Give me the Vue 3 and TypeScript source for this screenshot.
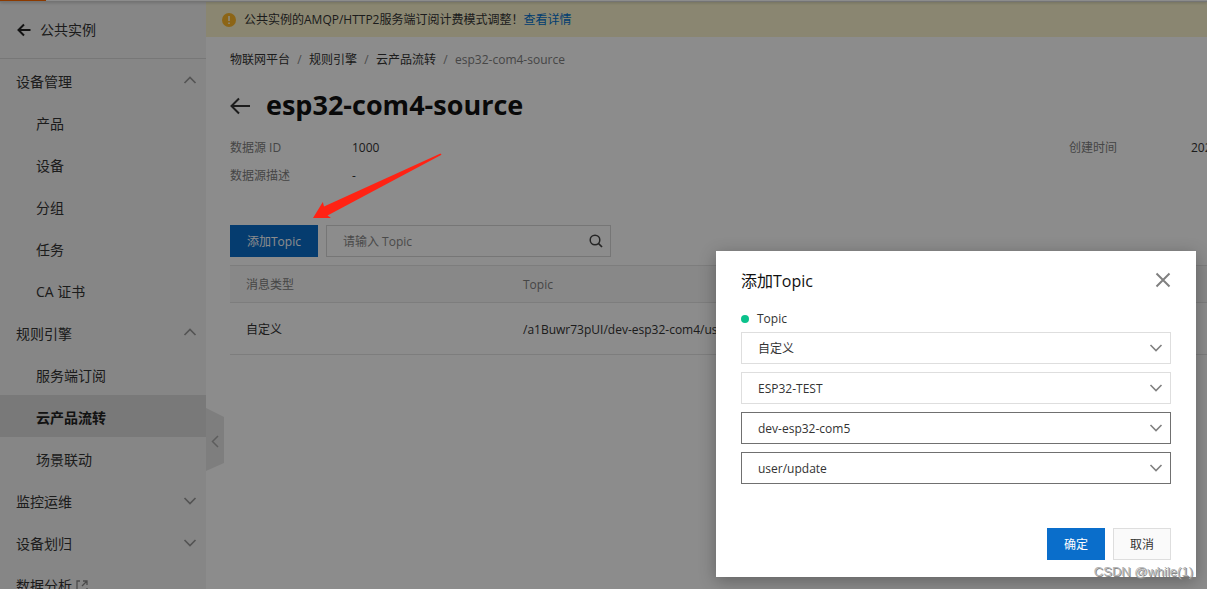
<script setup lang="ts">
import { reactive, ref } from 'vue'

interface NavItem {
  label: string
  active?: boolean
}

interface NavGroup {
  label: string
  open: boolean
  external?: boolean
  items: NavItem[]
}

interface TopicField {
  id: string
  label: string
  value: string
  strong: boolean
}

const groups = reactive<NavGroup[]>([
  {
    label: '设备管理',
    open: true,
    items: [{ label: '产品' }, { label: '设备' }, { label: '分组' }, { label: '任务' }, { label: 'CA 证书' }],
  },
  {
    label: '规则引擎',
    open: true,
    items: [{ label: '服务端订阅' }, { label: '云产品流转', active: true }, { label: '场景联动' }],
  },
  { label: '监控运维', open: false, items: [] },
  { label: '设备划归', open: false, items: [] },
  { label: '数据分析', open: false, external: true, items: [] },
])

const crumbs = ['物联网平台', '规则引擎', '云产品流转']

const fields = reactive<TopicField[]>([
  { id: 'topic-type', label: '消息类型', value: '自定义', strong: false },
  { id: 'topic-product', label: '产品', value: 'ESP32-TEST', strong: false },
  { id: 'topic-device', label: '设备', value: 'dev-esp32-com5', strong: true },
  { id: 'topic-path', label: 'Topic', value: 'user/update', strong: true },
])

const rows = [{ type: '自定义', topic: '/a1Buwr73pUI/dev-esp32-com4/user' }]

const keyword = ref('')
</script>

<template>
  <div class="page">
    <div class="topbar"><span class="topbar-mark"></span></div>
    <div class="shell">
      <aside class="sidebar">
        <a class="side-head" href="#">
          <svg width="14" height="14" viewBox="0 0 14 14" aria-hidden="true">
            <path d="M7 1.5 1.5 7 7 12.500M1.800 7H13.500" fill="none" stroke="#222" stroke-width="2" />
          </svg>
          <span>公共实例</span>
        </a>
        <nav>
          <template v-for="group in groups" :key="group.label">
            <button class="nav-group" type="button" @click="group.open = !group.open">
              <span>{{ group.label }}</span>
              <svg v-if="group.external" class="external" width="12" height="12" viewBox="0 0 12 12" aria-hidden="true">
                <path d="M4 1H1v10h10V8M7 1h4v4M11 1 6 6" fill="none" stroke="#888" stroke-width="1.300" />
              </svg>
              <svg v-else class="chevron" :class="{ up: group.open }" width="14" height="8" viewBox="0 0 14 8" aria-hidden="true">
                <path d="M1.500 1 7 6.500 12.500 1" fill="none" stroke="#999" stroke-width="1.700" />
              </svg>
            </button>
            <template v-if="group.open">
              <a v-for="item in group.items" :key="item.label" class="nav-item" :class="{ active: item.active }" href="#">
                {{ item.label }}
              </a>
            </template>
          </template>
        </nav>
      </aside>

      <main class="main">
        <button class="collapse" type="button" aria-label="收起">
          <svg width="18" height="64" viewBox="0 0 18 64" aria-hidden="true">
            <path d="M0 0 18 9V55L0 63Z" fill="#e6e6e6" />
            <path d="M12 28 6.500 33.500 12 39" fill="none" stroke="#aaa" stroke-width="1.500" />
          </svg>
        </button>

        <div class="banner">
          <svg width="14" height="14" viewBox="0 0 14 14" aria-hidden="true">
            <circle cx="7" cy="7" r="7" fill="#ffb829" />
            <path d="M7 3v5M7 9.500v1.500" stroke="#fff5d0" stroke-width="1.800" />
          </svg>
          <p>公共实例的AMQP/HTTP2服务端订阅计费模式调整！<a href="#">查看详情</a></p>
        </div>

        <div class="content">
          <nav class="crumbs" aria-label="路径">
            <template v-for="crumb in crumbs" :key="crumb">
              <a href="#">{{ crumb }}</a><span class="slash">/</span>
            </template>
            <span class="current">esp32-com4-source</span>
          </nav>

          <div class="title">
            <a href="#" aria-label="返回">
              <svg width="20" height="20" viewBox="0 0 20 20" aria-hidden="true">
                <path d="M9 3.500 1.500 11 9 18.500M1.800 11H20" fill="none" stroke="#333" stroke-width="2" />
              </svg>
            </a>
            <h1>esp32-com4-source</h1>
          </div>

          <dl class="details">
            <dt>数据源 ID</dt>
            <dd>1000</dd>
            <dt>创建时间</dt>
            <dd>202</dd>
            <dt>数据源描述</dt>
            <dd>-</dd>
          </dl>

          <div class="toolbar">
            <button class="primary" type="button">添加Topic</button>
            <div class="search">
              <input v-model="keyword" type="text" placeholder="请输入 Topic" aria-label="请输入 Topic" />
              <button type="button" aria-label="搜索">
                <svg width="14" height="14" viewBox="0 0 14 14" aria-hidden="true">
                  <circle cx="6" cy="6" r="4.800" fill="none" stroke="#444" stroke-width="1.500" />
                  <path d="m9.500 9.500 3.500 3.500" stroke="#444" stroke-width="1.700" />
                </svg>
              </button>
            </div>
          </div>

          <table class="topics">
            <thead>
              <tr>
                <th class="type-col">消息类型</th>
                <th>Topic</th>
              </tr>
            </thead>
            <tbody>
              <tr v-for="row in rows" :key="row.topic">
                <td>{{ row.type }}</td>
                <td>{{ row.topic }}</td>
              </tr>
            </tbody>
          </table>
        </div>
      </main>
    </div>

    <div class="overlay">
      <section class="dialog" role="dialog" aria-labelledby="dialog-title">
        <header>
          <h2 id="dialog-title">添加Topic</h2>
          <button type="button" aria-label="关闭">
            <svg width="16" height="16" viewBox="0 0 16 16" aria-hidden="true">
              <path d="m1.500 1.500 13 13m0-13-13 13" stroke="#808080" stroke-width="2" />
            </svg>
          </button>
        </header>
        <div class="legend"><span class="dot"></span>Topic</div>
        <div class="fields">
          <div v-for="field in fields" :key="field.id" class="select" :class="{ strong: field.strong }">
            <select :id="field.id" v-model="field.value" :aria-label="field.label">
              <option :value="field.value">{{ field.value }}</option>
            </select>
            <svg width="14" height="8" viewBox="0 0 14 8" aria-hidden="true">
              <path d="M1.500 1 7 6.500 12.500 1" fill="none" stroke="#808080" stroke-width="1.600" />
            </svg>
          </div>
        </div>
        <footer>
          <button class="primary" type="button">确定</button>
          <button class="plain" type="button">取消</button>
        </footer>
      </section>
    </div>

    <svg class="pointer" width="130" height="66" viewBox="0 0 130 66" aria-hidden="true">
      <path d="M127.500.6 128.500 1.800 14.500 62.500 18 65H0L9.800 49 11 53.500Z" fill="#ff2314" />
    </svg>
    <span class="watermark">CSDN @while(1)</span>
  </div>
</template>

<style>
body {
  margin: 0;
  overflow: hidden;
}
</style>

<style scoped>
.page {
  position: relative;
  display: flex;
  flex-direction: column;
  height: 100vh;
  overflow: hidden;
  background: #fff;
  color: #333;
  font: 12px/20px 'Open Sans', 'Noto Sans CJK SC', sans-serif;
}

.page *,
.page *::before {
  box-sizing: border-box;
}

button,
input,
select {
  margin: 0;
  padding: 0;
  border: 0;
  border-radius: 0;
  background: none;
  color: inherit;
  font: inherit;
}

a {
  color: inherit;
  text-decoration: none;
}

svg {
  display: block;
  flex: none;
}

.topbar {
  position: relative;
  z-index: 1;
  flex: none;
  height: 2px;
  border-bottom: 1px solid #d4d4d4;
  box-shadow: 0 1px 3px rgba(0, 0, 0, 0.2);
}

.topbar-mark {
  display: block;
  width: 46px;
  height: 1px;
  background: #ff6a00;
}

.shell {
  display: flex;
  flex: 1;
  min-height: 0;
}

.sidebar {
  flex: none;
  width: 206px;
  overflow: hidden;
  background: #f4f4f4;
  font-size: 14px;
}

.side-head {
  display: flex;
  align-items: center;
  gap: 9px;
  height: 57px;
  padding: 0 17px;
  border-bottom: 1px solid #d9d9d9;
}

.nav-group,
.nav-item {
  display: flex;
  align-items: center;
  width: 100%;
  height: 42px;
  padding: 4px 9px 0 16px;
}

.nav-item {
  padding-left: 36px;
}

.nav-item.active {
  background: #dcdcdc;
  color: #222;
  font-weight: 700;
}

.chevron {
  margin-left: auto;
  margin-bottom: 2px;
}

.chevron.up {
  margin-bottom: 4px;
  transform: rotate(180deg);
}

.external {
  margin-left: 4px;
}

.main {
  position: relative;
  flex: 1;
  min-width: 0;
  overflow: hidden;
}

.collapse {
  position: absolute;
  top: 406px;
  left: 0;
}

.banner {
  display: flex;
  align-items: center;
  gap: 8px;
  height: 35px;
  padding: 0 16px;
  background: #fcf5ce;
}

.banner p {
  margin: 0;
}

.banner a {
  color: #0070cc;
}

.content {
  padding: 13px 0 0 24px;
}

.crumbs {
  display: flex;
}

.slash {
  width: 5px;
  margin: 0 7px;
  color: #888;
  text-align: center;
}

.current {
  color: #808080;
}

.title {
  display: flex;
  align-items: center;
  gap: 16px;
  height: 36px;
  margin-top: 17px;
}

h1 {
  margin: 0;
  color: #111;
  font-size: 27px;
  line-height: 36px;
}

.details {
  display: grid;
  grid-template-columns: 122px minmax(0, 1fr) 122px 16px;
  margin: 11px 0 0;
  line-height: 28px;
}

dt {
  color: #808080;
}

dd {
  margin: 0;
}

.toolbar {
  display: flex;
  gap: 8px;
  margin-top: 35px;
}

.primary,
.plain {
  height: 32px;
  padding: 2px 16px 0;
  border: 1px solid #dedede;
}

.primary {
  border-color: #0a6ecb;
  background: #0a6ecb;
  color: #fff;
}

.plain {
  background: #fafafa;
}

.search {
  display: flex;
  width: 285px;
  height: 32px;
  border: 1px solid #d8d8d8;
}

.search input {
  flex: 1;
  min-width: 0;
  padding: 2px 0 0 16px;
  outline: 0;
}

.search input::placeholder {
  color: #888;
  opacity: 1;
}

.search button {
  padding: 0 7px;
}

.topics {
  width: 100%;
  margin-top: 8px;
  border-collapse: separate;
  border-spacing: 0;
  table-layout: fixed;
  text-align: left;
}

.topics th,
.topics td {
  padding: 2px 16px 0;
  border-bottom: 1px solid #e3e3e3;
  white-space: nowrap;
}

.topics th {
  height: 38px;
  border-top: 1px solid #e3e3e3;
  background: #f8f8f8;
  color: #808080;
  font-weight: 400;
}

.topics td {
  height: 52px;
}

.type-col {
  width: 277px;
}

.overlay {
  position: absolute;
  z-index: 2;
  inset: 0;
  display: flex;
  align-items: flex-end;
  justify-content: flex-end;
  padding: 12px 11px;
  background: rgba(0, 0, 0, 0.45);
}

.dialog {
  width: 480px;
  padding: 18px 25px 17px;
  background: #fff;
  box-shadow: 0 4px 16px rgba(0, 0, 0, 0.3);
}

.dialog header {
  display: flex;
  align-items: center;
  justify-content: space-between;
}

h2 {
  margin: 0;
  color: #111;
  font-size: 16px;
  font-weight: 400;
  line-height: 24px;
}

.legend {
  display: flex;
  align-items: center;
  gap: 8px;
  margin-top: 16px;
}

.dot {
  width: 8px;
  height: 8px;
  border-radius: 50%;
  background: #0bc28c;
}

.fields {
  display: grid;
  gap: 8px;
  margin-top: 3px;
}

.dialog header button {
  margin-bottom: 2px;
}

.select {
  display: grid;
  align-items: center;
  height: 32px;
  border: 1px solid #dedede;
}

.select.strong {
  border-color: #707070;
}

.select select,
.select svg {
  grid-area: 1 / 1;
}

.select select {
  width: 100%;
  height: 30px;
  padding: 2px 32px 0 16px;
  appearance: none;
  outline: 0;
}

.select svg {
  justify-self: end;
  margin-right: 7px;
  pointer-events: none;
}

.dialog footer {
  display: flex;
  justify-content: flex-end;
  gap: 8px;
  margin-top: 44px;
}

.pointer {
  position: absolute;
  z-index: 3;
  top: 153px;
  left: 313px;
}

.watermark {
  position: absolute;
  z-index: 3;
  right: 14px;
  bottom: 7px;
  color: #b4b4b4;
  font: 13px/20px 'Liberation Sans', sans-serif;
  text-shadow: 1px 1px 0 #888;
}
</style>
